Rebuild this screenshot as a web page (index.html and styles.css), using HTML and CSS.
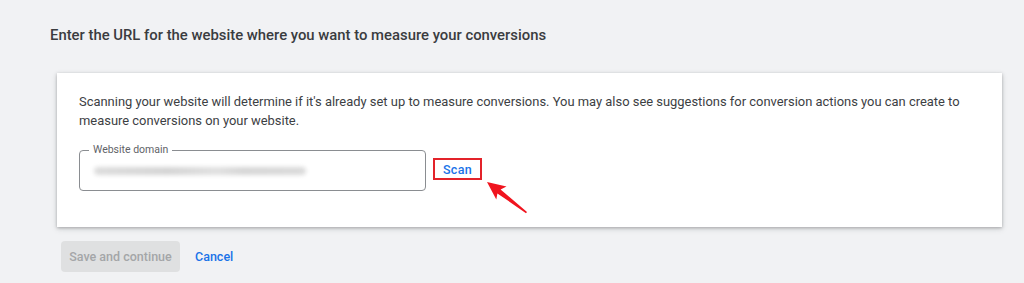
FILE: index.html
```html
<!DOCTYPE html>
<html>
<head>
<meta charset="utf-8">
<link rel="stylesheet" href="styles.css">
</head>
<body>
<div class="page">
  <h2 class="title">Enter the URL for the website where you want to measure your conversions</h2>
  <div class="card">
    <p class="desc">Scanning your website will determine if it's already set up to measure conversions. You may also see suggestions for conversion actions you can create to measure conversions on your website.</p>
    <div class="row">
      <div class="field">
        <span class="label">Website domain</span>
        <span class="blur"></span>
      </div>
      <div class="scan-wrap">
        <span class="scan">Scan</span>
        <svg class="arrow" width="50" height="40" viewBox="0 0 50 40">
          <path d="M2 2 L21.5 6.5 L15.6 9.4 L42 32 L41 33.2 L12.4 13.4 L11.3 19.5 Z" fill="#f0141e"/>
        </svg>
      </div>
    </div>
  </div>
  <div class="actions">
    <span class="btn-disabled">Save and continue</span>
    <span class="btn-link">Cancel</span>
  </div>
</div>
</body>
</html>
```
FILE: styles.css
```css
* { box-sizing: border-box; }
html, body { margin: 0; padding: 0; }
body {
  background: #f1f2f4;
  font-family: Roboto, "Liberation Sans", Arial, sans-serif;
  color: #3c4043;
  width: 1024px;
  height: 283px;
  overflow: hidden;
}
.page {
  padding: 25px 22px 0 50px;
}
.title {
  margin: 0;
  font-size: 14.85px;
  font-weight: 500;
  line-height: 20px;
  color: #3a3c3f;
}
.card {
  margin: 28px 0 0 7px;
  width: 945px;
  height: 154px;
  background: #fff;
  box-shadow: 0 1px 3px rgba(60,64,67,0.35), 0 2px 6px rgba(60,64,67,0.15);
  padding: 19px 22px 0 22px;
}
.desc {
  margin: 0;
  font-size: 12.93px;
  line-height: 19px;
  color: #3c4043;
}
.row {
  display: flex;
  align-items: flex-start;
  margin-top: 20px;
}
.field {
  position: relative;
  width: 347px;
  height: 41px;
  border: 1px solid #8a8d91;
  border-radius: 4px;
}
.label {
  position: absolute;
  top: -8px;
  left: 9px;
  padding: 0 4px;
  background: #fff;
  font-size: 10.5px;
  line-height: 14px;
  color: #5f6368;
}
.blur {
  position: absolute;
  left: 14px;
  top: 16px;
  width: 212px;
  height: 8px;
  border-radius: 4px;
  background: linear-gradient(90deg, #dcdcdc 0%, #d4d4d4 35%, #e0e0e0 58%, #d6d6d6 70%, #dadada 100%);
  filter: blur(2px);
}
.scan-wrap {
  position: relative;
  margin: 8px 0 0 7px;
}
.scan {
  display: block;
  width: 49px;
  height: 22px;
  border: 2px solid #e3232a;
  color: #1a73e8;
  font-size: 12.5px;
  font-weight: 500;
  line-height: 20px;
  text-align: center;
  letter-spacing: 0.3px;
}
.arrow {
  position: absolute;
  left: 52px;
  top: 22px;
}
.actions {
  display: flex;
  align-items: center;
  margin: 14px 0 0 11px;
  gap: 15px;
}
.btn-disabled {
  display: inline-block;
  width: 119px;
  height: 31px;
  line-height: 31px;
  text-align: center;
  background: #dfe0e1;
  border-radius: 4px;
  color: #a4a6a8;
  font-size: 12.5px;
  font-weight: 500;
}
.btn-link {
  color: #1a73e8;
  font-size: 12.5px;
  font-weight: 500;
}
```
